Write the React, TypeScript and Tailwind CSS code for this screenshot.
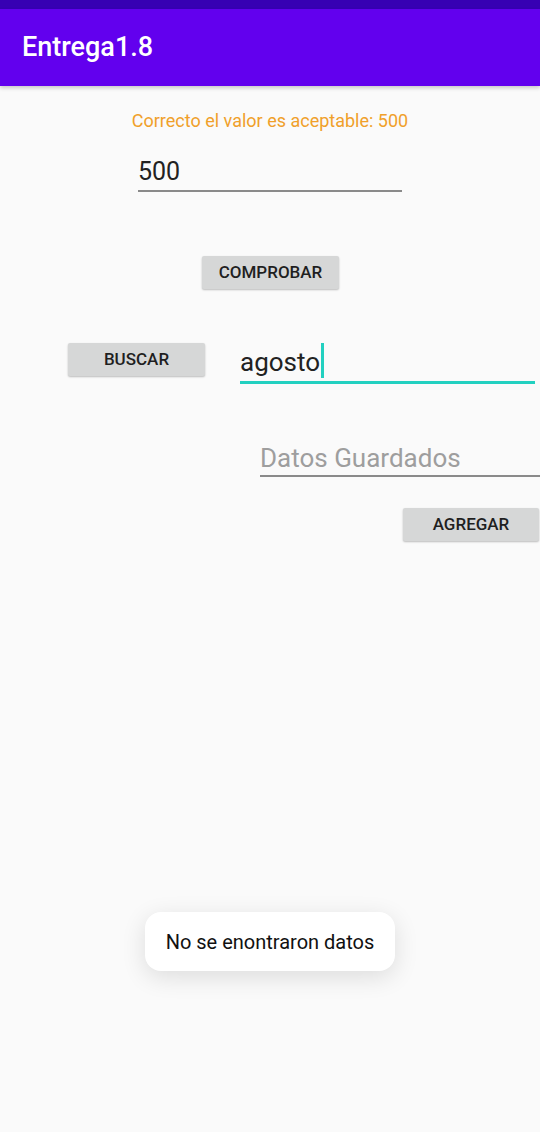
import React from 'react';

const font = { fontFamily: 'Roboto, "Noto Sans", sans-serif' };

function GrayButton({ label, className }: { label: string; className: string }) {
  return (
    <div
      className={`flex h-[33px] items-center justify-center rounded-[2px] bg-[#d6d7d7] text-[17px] font-medium text-[#1f1f1f] shadow-[0_1px_2px_rgba(0,0,0,0.25)] ${className}`}
    >
      {label}
    </div>
  );
}

export default function App() {
  return (
    <div className="flex min-h-[1132px] w-[540px] flex-col bg-[#fafafa]" style={font}>
      {/* status bar */}
      <div className="h-[9px] bg-[#3700b3]" />
      {/* app bar */}
      <div className="flex h-[77px] items-center bg-[#6200ee] pl-[22px] shadow-[0_2px_4px_rgba(0,0,0,0.2)]">
        <span className="text-[27px] font-medium text-white">Entrega1.8</span>
      </div>

      <div className="flex flex-col">
        <p className="mt-[23px] text-center text-[18px] leading-[24px] text-[#f0a02a]">
          Correcto el valor es aceptable: 500
        </p>

        <div className="ml-[138px] mt-[24px] w-[264px] border-b-2 border-[#8a8a8a] pb-[3px]">
          <span className="block text-[25px] leading-[30px] text-[#222]">500</span>
        </div>

        <GrayButton label="COMPROBAR" className="ml-[202px] mt-[64px] w-[137px]" />

        <div className="mt-[54px] flex items-start">
          <GrayButton label="BUSCAR" className="ml-[68px] w-[137px]" />
          <div className="ml-[35px] flex w-[295px] items-end border-b-[3px] border-[#22d0c0] pb-[3px]">
            <span className="text-[26px] leading-[32px] text-[#222]">agosto</span>
            <span className="ml-[1px] inline-block h-[35px] w-[3px] bg-[#22d0c0]" />
          </div>
        </div>

        <div className="ml-[260px] mt-[58px] w-[280px] border-b-2 border-[#8a8a8a] pb-[1px]">
          <span className="block text-[26px] leading-[32px] text-[#9e9e9e]">Datos Guardados</span>
        </div>

        <GrayButton label="AGREGAR" className="ml-[403px] mt-[31px] w-[136px]" />

        <div className="mt-[371px] flex justify-center">
          <div className="flex h-[59px] w-[250px] items-center justify-center rounded-[16px] bg-white shadow-[0_6px_24px_rgba(0,0,0,0.12)]">
            <span className="text-[20px] text-[#111]">No se enontraron datos</span>
          </div>
        </div>
      </div>
    </div>
  );
}
